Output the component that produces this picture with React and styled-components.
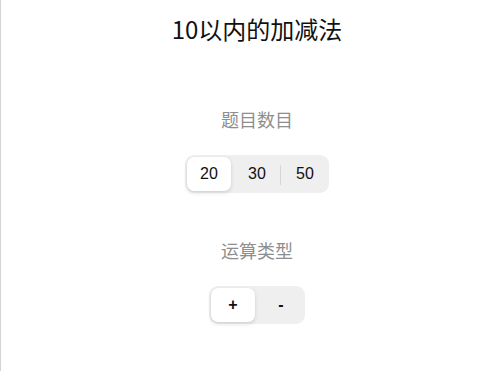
import React, {useState} from 'react';
import styled, {createGlobalStyle} from 'styled-components';

const GlobalStyle = createGlobalStyle`
    html, body {
        margin: 0;
        padding: 0;
        background: #ffffff;
    }
    body {
        font-family: "Noto Sans CJK SC", "Noto Sans", sans-serif;
    }
`;

const Page = styled.div`
    min-height: 100vh;
    box-sizing: border-box;
    border-left: 1px solid #d4d4d4;
    padding: 13px 0 0 10px;
    display: flex;
    flex-direction: column;
    align-items: center;
`;

const Title = styled.h1`
    margin: 0;
    font-size: 24px;
    line-height: 32px;
    font-weight: 400;
    color: #111111;
`;

const Section = styled.section`
    display: flex;
    flex-direction: column;
    align-items: center;
    gap: 24px;
    margin-top: ${props => props.top}px;
`;

const Label = styled.div`
    font-size: 18px;
    line-height: 24px;
    color: #8e8e8e;
`;

const Segmented = styled.div`
    display: flex;
    gap: 4px;
    padding: 2px;
    background: #efefef;
    border-radius: 9px;
`;

const Segment = styled.button`
    position: relative;
    width: 44px;
    height: 34px;
    border: none;
    padding: 0;
    border-radius: 7px;
    background: ${props => props.active ? '#ffffff' : 'transparent'};
    box-shadow: ${props => props.active ? '0 2px 4px rgba(0,0,0,0.12), 0 0 1px rgba(0,0,0,0.08)' : 'none'};
    font-family: "Liberation Sans", Arial, sans-serif;
    font-size: 16px;
    font-weight: ${props => props.bold ? 700 : 400};
    color: #111111;
    cursor: pointer;

    &::before {
        content: '';
        display: ${props => props.divider ? 'block' : 'none'};
        position: absolute;
        left: -3px;
        top: 8px;
        width: 1px;
        height: 20px;
        background: #d6d6d6;
    }
`;

const counts = ['20', '30', '50'];
const ops = ['+', '-'];

function Picker({options, value, onPick, bold}) {
    return (
        <Segmented>
            {options.map((o, i) => {
                const prev = options[i - 1];
                const divider = i > 0 && o !== value && prev !== value;
                return (
                    <Segment key={o} active={o === value} divider={divider} bold={bold} onClick={() => onPick(o)}>
                        {o}
                    </Segment>
                );
            })}
        </Segmented>
    );
}

export default function App() {
    const [count, setCount] = useState('20');
    const [op, setOp] = useState('+');
    return (
        <Page>
            <GlobalStyle />
            <Title>10以内的加减法</Title>
            <Section top={62}>
                <Label>题目数目</Label>
                <Picker options={counts} value={count} onPick={setCount} />
            </Section>
            <Section top={45}>
                <Label>运算类型</Label>
                <Picker options={ops} value={op} onPick={setOp} bold />
            </Section>
        </Page>
    );
}
